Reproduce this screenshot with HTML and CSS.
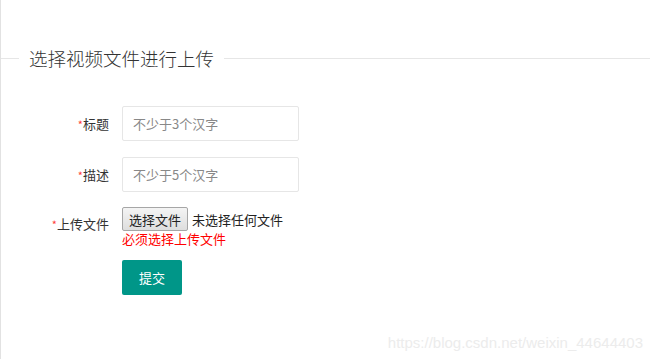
FILE: index.html
```html
<!DOCTYPE html>
<html lang="zh-CN">
<head>
    <meta charset="UTF-8">
    <meta name="viewport" content="width=device-width, initial-scale=1.0">
    <title>视频上传</title>
    <link rel="stylesheet" href="styles.css">
</head>
<body>
    <fieldset class="field-title">
        <legend>选择视频文件进行上传</legend>
    </fieldset>

    <form class="upload-form">
        <div class="form-item">
            <label class="form-label"><span class="req">*</span>标题</label>
            <input type="text" class="form-input" placeholder="不少于3个汉字">
        </div>
        <div class="form-item">
            <label class="form-label"><span class="req">*</span>描述</label>
            <input type="text" class="form-input" placeholder="不少于5个汉字">
        </div>
        <div class="form-item file-item">
            <label class="form-label"><span class="req">*</span>上传文件</label>
            <div class="file-block">
                <div class="file-row">
                    <button type="button" class="file-btn">选择文件</button>
                    <span class="file-name">未选择任何文件</span>
                </div>
                <div class="form-error">必须选择上传文件</div>
            </div>
        </div>
        <div class="form-item">
            <span class="form-label"></span>
            <button type="button" class="btn-submit">提交</button>
        </div>
    </form>

    <div class="watermark">https://blog.csdn.net/weixin_44644403</div>
</body>
</html>
```

FILE: styles.css
```css
html, body {
    height: 100%;
}
body {
    margin: 0;
    padding-top: 44px;
    box-sizing: border-box;
    border-left: 1px solid #e2e2e2;
    background: #fff;
    font-family: "Noto Sans CJK SC", "Liberation Sans", sans-serif;
    font-size: 13px;
    color: #333;
}
.field-title {
    margin: 0;
    padding: 0;
    border: none;
    border-top: 1px solid #e6e6e6;
}
.field-title legend {
    margin-left: 18px;
    padding: 0 10px;
    font-size: 18.5px;
    font-weight: 300;
    line-height: 28px;
    color: #333;
}
.upload-form {
    margin-top: 34px;
}
.form-item {
    display: flex;
    align-items: flex-start;
    margin-bottom: 15px;
}
.form-label {
    width: 108px;
    margin-right: 13px;
    text-align: right;
    line-height: 35px;
    color: #333;
}
.req {
    color: #ff3b3b;
    font-size: 11px;
}
.form-input {
    width: 177px;
    height: 35px;
    box-sizing: border-box;
    padding: 0 10px;
    border: 1px solid #e6e6e6;
    border-radius: 2px;
    font-family: inherit;
    font-size: 13px;
    color: #333;
    outline: none;
}
.form-input::placeholder {
    color: #888;
}
.file-item {
    margin-top: -1px;
    margin-bottom: 13px;
}
.file-item .form-label {
    line-height: 24px;
    margin-top: 5px;
}
.file-row {
    display: flex;
    align-items: center;
    height: 24px;
}
.file-btn {
    height: 24px;
    padding: 0 6px;
    border: 1px solid #a6a6a6;
    border-radius: 2px;
    background: linear-gradient(#f4f4f4, #dedede);
    font-family: inherit;
    font-size: 13px;
    color: #222;
}
.file-name {
    margin-left: 4px;
    color: #222;
}
.form-error {
    margin-top: -1px;
    line-height: 17px;
    color: #f00;
}
.btn-submit {
    width: 60px;
    height: 35px;
    border: none;
    border-radius: 2px;
    background-color: #009688;
    color: #fff;
    font-family: inherit;
    font-size: 13px;
    cursor: pointer;
}
.watermark {
    position: absolute;
    right: 7px;
    bottom: 8px;
    font-family: "Liberation Sans", Arial, sans-serif;
    font-size: 15px;
    color: #ececec;
}
```
